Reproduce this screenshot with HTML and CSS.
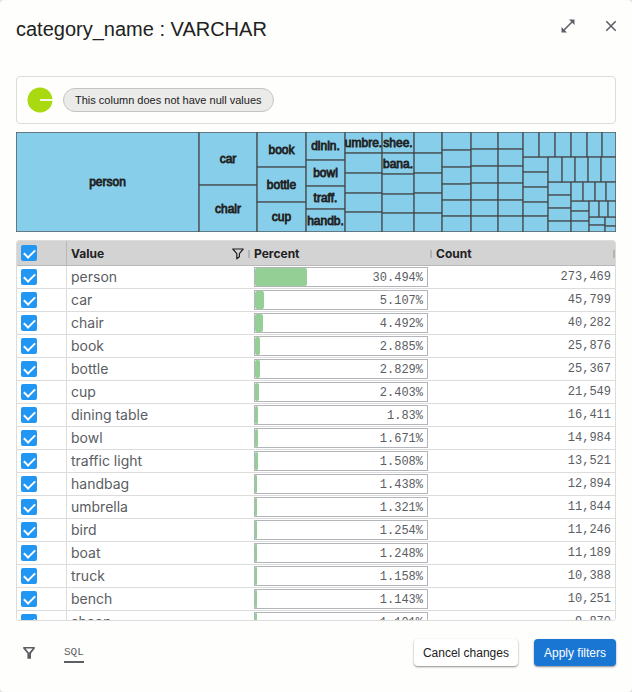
FILE: index.html
```html
<!DOCTYPE html>
<html lang="en">
<head>
<meta charset="utf-8">
<title>category_name : VARCHAR</title>
<link rel="stylesheet" href="styles.css">
</head>
<body>
<main class="dialog">
  <header class="title-bar">
    <h1 class="title">category_name : VARCHAR</h1>
    <div class="title-actions">
      <button class="icon-button" type="button" aria-label="Expand">
        <svg width="14" height="14" viewBox="0 0 14 14"><path d="M3 11 11 3" stroke="currentColor" stroke-width="1.6"/><path d="M8 .5h5.5V6zM.5 8v5.5H6z" fill="currentColor"/></svg>
      </button>
      <button class="icon-button" type="button" aria-label="Close">
        <svg width="14" height="14" viewBox="0 0 14 14"><path d="m2.3 2.3 9.4 9.4m0-9.4-9.4 9.4" stroke="currentColor" stroke-width="1.6"/></svg>
      </button>
    </div>
  </header>

  <section class="null-card">
    <svg width="26" height="26" viewBox="0 0 26 26" aria-hidden="true"><circle cx="13" cy="13" r="12.5" fill="#a8d911"/><path d="M13 13h13" stroke="#f3fadf" stroke-width="2"/></svg>
    <span class="chip">This column does not have null values</span>
  </section>

  <svg class="treemap" id="treemap" viewBox="0 0 600 100" role="img" aria-label="Value distribution"></svg>

  <div class="grid">
    <table>
      <colgroup><col class="col-check"><col class="col-value"><col class="col-percent"><col></colgroup>
      <thead>
        <tr>
          <th class="check"><input type="checkbox" checked aria-label="Select all"></th>
          <th><div class="head"><span>Value</span><svg class="head-filter" width="12" height="12" viewBox="0 0 12 12"><path d="M.8 1h10.4L7.4 5.6v3.2L4.8 10.8V5.6z" fill="none" stroke="currentColor" stroke-width="1.2" stroke-linejoin="round"/></svg><i class="handle"></i></div></th>
          <th><div class="head"><span>Percent</span><i class="handle"></i></div></th>
          <th><div class="head"><span>Count</span><i class="handle"></i></div></th>
        </tr>
      </thead>
      <tbody id="rows"></tbody>
    </table>
  </div>

  <footer class="footer">
    <button class="icon-button filter-button" type="button" aria-label="Filters">
      <svg width="14" height="14" viewBox="0 0 14 14"><path d="M1.2 1h11.6v1.4L9 7.4v5.4H5.4V7.4L1.2 2.4zM3.6 2.6 7 6.8l3.6-4.2z" fill="currentColor" fill-rule="evenodd"/></svg>
    </button>
    <button class="sql-button" type="button">SQL</button>
    <button class="button cancel" type="button">Cancel changes</button>
    <button class="button apply" type="button">Apply filters</button>
  </footer>
</main>
<script src="script.js"></script>
</body>
</html>
```
FILE: styles.css
```css
* { box-sizing: border-box; }

body {
  margin: 0;
  background: #dcdcdc;
  font-family: "Liberation Sans", Arial, sans-serif;
  color: #212121;
}

button {
  font: inherit;
  border: 0;
  padding: 0;
  background: none;
  cursor: pointer;
}

.dialog {
  display: flex;
  flex-direction: column;
  height: 100vh;
  padding: 0 16px;
  border-radius: 4px;
  background: #fefefc;
}

.title-bar {
  display: flex;
  justify-content: space-between;
  flex: none;
  height: 76px;
  padding-top: 15px;
}

.title {
  margin: 0;
  font-size: 20px;
  line-height: 28px;
  font-weight: 400;
}

.title-actions {
  display: flex;
  align-items: center;
  gap: 29px;
  height: 22px;
}

.icon-button {
  display: flex;
  color: #5c5f66;
}

.title-actions .icon-button:last-child { margin-right: -2px; }

.null-card {
  display: flex;
  align-items: center;
  flex: none;
  gap: 10px;
  height: 48px;
  padding: 0 10px;
  border: 1px solid #dcdcda;
  border-radius: 4px;
}

.chip {
  padding: 0 11px;
  border: 1px solid #c4c4c4;
  border-radius: 12px;
  background: #ebebea;
  font-size: 11px;
  line-height: 22px;
}

.treemap {
  display: block;
  flex: none;
  width: 100%;
  margin: 8px 0;
}

.treemap rect {
  fill: #87ceeb;
  stroke: #222;
  stroke-opacity: 0.7;
}

.treemap text {
  fill: #222;
  stroke: #222;
  stroke-width: 0.8px;
  font-size: 12px;
  text-anchor: middle;
}

.grid {
  flex: 1;
  min-height: 0;
  overflow: auto;
  scrollbar-width: none;
  border: 1px solid #dcdcdc;
  border-radius: 3px;
  background: #fff;
}

table {
  width: 100%;
  border-collapse: separate;
  border-spacing: 0;
  table-layout: fixed;
  font-family: Inter, sans-serif;
}

.col-check { width: 50px; }
.col-value { width: 183px; }
.col-percent { width: 182px; }

th {
  position: sticky;
  top: 0;
  height: 25px;
  padding: 1px 0 0 4px;
  border-bottom: 1px solid #b8b8b8;
  background: #d3d3d3;
  font-size: 12px;
  line-height: 16px;
  font-weight: 700;
  text-align: left;
}

.head {
  display: flex;
  align-items: center;
}

.head span { flex: 1; }
.head-filter { margin-right: 4px; }

.handle {
  width: 2px;
  height: 8px;
  background: #b3b3b3;
}

td {
  height: 23px;
  padding: 0 4px;
  border-bottom: 1px solid #dcdcdc;
  color: #5a5d63;
  font-size: 14px;
  line-height: 20px;
}

th.check, td.check {
  padding: 0 0 0 4px;
  border-right: 1px solid #dcdcdc;
}

th.check { border-right-color: #b8b8b8; }

td.count {
  font-family: "Liberation Mono", monospace;
  font-size: 12px;
  text-align: right;
}

input[type="checkbox"] {
  appearance: none;
  display: grid;
  justify-items: center;
  align-items: start;
  width: 16px;
  height: 16px;
  margin: 0;
  padding-top: 4px;
  border-radius: 2px;
  background: #2196f3;
}

input[type="checkbox"]::before {
  content: "";
  width: 9px;
  height: 5px;
  border: solid #fff;
  border-width: 0 0 2px 2px;
  transform: rotate(-45deg);
}

input[type="checkbox"]:not(:checked)::before { visibility: hidden; }

.meter {
  display: grid;
  width: 174px;
  height: 20px;
  border: 1px solid #b4b5ba;
  font-family: "Liberation Mono", monospace;
  font-size: 12px;
  line-height: 20px;
  text-align: right;
}

.meter > * { grid-area: 1 / 1; }
.meter span { padding-right: 4px; }

.fill {
  height: 18px;
  border-radius: 2px;
  background: #94d095;
}

.footer {
  display: flex;
  align-items: center;
  flex: none;
  height: 71px;
  padding-bottom: 8px;
}

.filter-button { margin: 0 28px 0 6px; }

.sql-button {
  margin-right: auto;
  border-bottom: 2px solid #5c5f66;
  color: #5c5f66;
  font-family: "Liberation Mono", monospace;
  font-size: 11px;
  line-height: 18px;
}

.button {
  height: 27px;
  padding: 0 10px;
  border-radius: 4px;
  box-shadow: 0 1px 2px rgba(0, 0, 0, 0.45);
  font-size: 12px;
}

.cancel {
  margin-right: 16px;
  padding: 0 9px;
  background: #fff;
  color: #212121;
}

.apply {
  background: #1976d2;
  color: #fff;
}
```
FILE: script.js
```js
const rows = [
  ["person", 30.494, "273,469"], ["car", 5.107, "45,799"], ["chair", 4.492, "40,282"],
  ["book", 2.885, "25,876"], ["bottle", 2.829, "25,367"], ["cup", 2.403, "21,549"],
  ["dining table", 1.83, "16,411"], ["bowl", 1.671, "14,984"], ["traffic light", 1.508, "13,521"],
  ["handbag", 1.438, "12,894"], ["umbrella", 1.321, "11,844"], ["bird", 1.254, "11,246"],
  ["boat", 1.248, "11,189"], ["truck", 1.158, "10,388"], ["bench", 1.143, "10,251"],
  ["sheep", 1.101, "9,870"]
];

document.getElementById("rows").innerHTML = rows.map(([name, percent, count]) => `
  <tr>
    <td class="check"><input type="checkbox" checked aria-label="${name}"></td>
    <td>${name}</td>
    <td><div class="meter"><div class="fill" style="width:${percent}%"></div><span>${percent}%</span></div></td>
    <td class="count">${count}</td>
  </tr>`).join("");

// Each entry: left, right, then the horizontal edges and the labels of the cells between them.
const columns = [
  [0, 183, [0, 100], ["person"]],
  [183, 241, [0, 53, 100], ["car", "chair"]],
  [241, 290, [0, 35, 70, 100], ["book", "bottle", "cup"]],
  [290, 329, [0, 28, 54, 77, 100], ["dinin.", "bowl", "traff.", "handb."]],
  [329, 366, [0, 21, 41, 61, 80, 100], ["umbre."]],
  [366, 398, [0, 21, 42, 62, 81, 100], ["shee.", "bana."]],
  [398, 426, [0, 21, 41, 61, 81, 100]],
  [426, 455, [0, 18, 35, 52, 68, 84, 100]],
  [455, 482, [0, 17, 34, 51, 68, 84, 100]],
  [482, 507, [0, 17, 34, 51, 68, 84, 100]],
  [507, 532, [25, 40, 55, 70, 84, 100]],
  [532, 555, [50, 63, 76, 89, 100]],
  [555, 573, [69, 79, 89, 100]],
  [573, 589, [85, 93, 100]],
  [589, 600, [85, 94, 100]]
];

// Each entry: top, bottom, then the vertical edges.
const bands = [
  [0, 25, [507, 523, 539, 555, 571, 586, 600]],
  [25, 50, [532, 546, 559, 572, 585, 600]],
  [50, 69, [555, 567, 579, 590, 600]],
  [69, 85, [573, 583, 592, 600]]
];

let cells = "";
let labels = "";
const addCell = (x1, y1, x2, y2) => {
  cells += `<rect x="${x1 + 0.25}" y="${y1 + 0.25}" width="${x2 - x1 - 0.5}" height="${y2 - y1 - 0.5}"/>`;
};

for (const [left, right, edges, names = []] of columns) {
  for (let i = 0; i < edges.length - 1; i++) {
    addCell(left, edges[i], right, edges[i + 1]);
    if (names[i]) {
      labels += `<text x="${(left + right) / 2}" y="${(edges[i] + edges[i + 1]) / 2 + 4}">${names[i]}</text>`;
    }
  }
}
for (const [top, bottom, edges] of bands) {
  for (let i = 0; i < edges.length - 1; i++) addCell(edges[i], top, edges[i + 1], bottom);
}
document.getElementById("treemap").innerHTML = cells + labels;
```
